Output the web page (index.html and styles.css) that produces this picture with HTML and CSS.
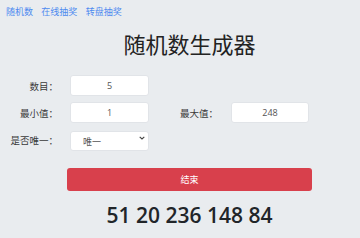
FILE: index.html
```html
<!DOCTYPE html>
<html lang="zh">
<head>
	<meta charset="UTF-8">
	<title>随机数生成器</title>
<link rel="stylesheet" href="styles.css">
</head>
<body>

<div class="nav">
	<a href="#">随机数</a>
	<a href="#">在线抽奖</a>
	<a href="#">转盘抽奖</a>
</div>

<div class="main">
	<h1 class="title">随机数生成器</h1>
</div>

<div class="form">
	<div class="row">
		<label class="label">数目：</label>
		<input class="field" type="text" value="5">
	</div>
	<div class="row">
		<label class="label">最小值：</label>
		<input class="field" type="text" value="1">
		<label class="label label-2">最大值：</label>
		<input class="field field-2" type="text" value="248">
	</div>
	<div class="row">
		<label class="label">是否唯一：</label>
		<div class="select-wrap">
			<select class="field select">
				<option>唯一</option>
				<option>不唯一</option>
			</select>
			<svg class="caret" width="6" height="4" viewBox="0 0 6 4"><path d="M0.7 0.8 L3 3 L5.3 0.8" fill="none" stroke="#444" stroke-width="1.1"/></svg>
		</div>
	</div>
</div>

<div class="main">
	<button class="btn" type="button">结束</button>
	<div class="result">51 20 236 148 84</div>
</div>

</body>
</html>
```

FILE: styles.css
```css
*{margin:0;padding:0;box-sizing:border-box;}

body{background:#e9ecef;font-family:"Open Sans","Noto Sans CJK SC",sans-serif;color:#333;}

/* 顶部链接 */
.nav{padding:6px 0 0 6px;height:18px;line-height:12px;font-size:9px;}
.nav a{color:#4d8af0;text-decoration:none;margin-right:6px;}

.main{margin-left:67px;width:245px;}
.title{margin-top:13px;font-size:22px;line-height:26px;font-weight:400;text-align:center;color:#222;}

/* 表单 */
.form{margin-top:18px;}
.form .row{display:flex;align-items:center;height:21px;margin-bottom:6px;}
.form .row:last-child{margin-bottom:0;}
.form .label{width:58px;text-align:right;font-size:9.5px;color:#3a3a3a;}
.form .label-2{width:51px;margin-left:31px;text-align:left;}
.form .field{width:79px;height:21px;margin-left:12px;border:1px solid #e1e4e8;border-radius:3px;background:#fff;
	text-align:center;font-family:"Open Sans","Noto Sans CJK SC",sans-serif;font-size:9px;color:#555;outline:none;}
.form .field-2{width:78px;margin-left:0;}
.select-wrap{position:relative;}
.form .select{-webkit-appearance:none;appearance:none;text-align:left;padding-left:12px;height:20px;}
.caret{position:absolute;right:4px;top:8px;}

/* 按钮 */
.btn{display:block;width:245px;height:23px;margin-top:18px;border:0;border-radius:3px;background:#d8404c;
	color:#fff;font-family:"Open Sans","Noto Sans CJK SC",sans-serif;font-size:9px;}

.result{margin-top:12px;text-align:center;font-size:21px;line-height:25px;font-weight:600;color:#212529;}
```
